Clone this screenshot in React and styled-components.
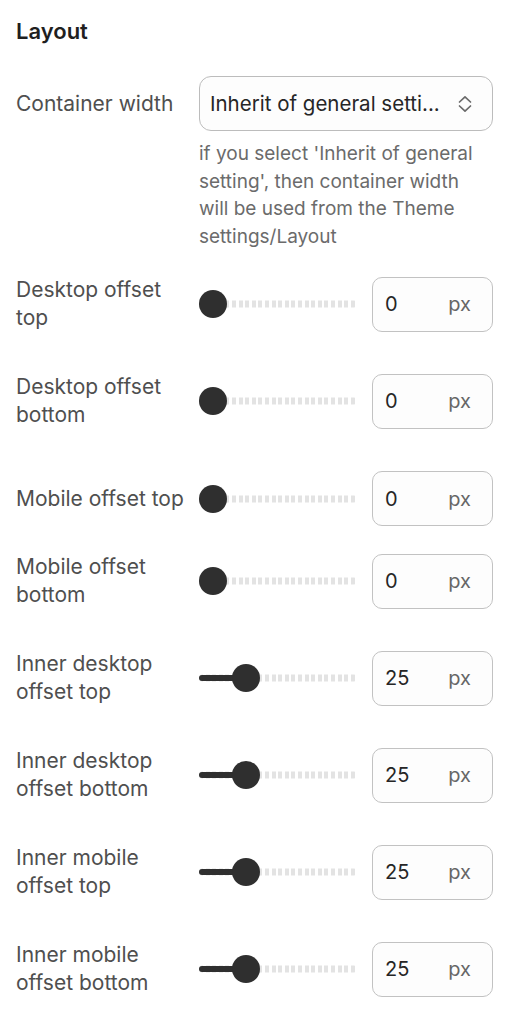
import React from "react"
import styled, { createGlobalStyle } from "styled-components"

const GlobalStyle = createGlobalStyle`
    body {
        margin: 0;
        background: #ffffff;
        font-family: Inter, "Noto Sans", sans-serif;
        -webkit-font-smoothing: antialiased;
    }
`

const offsetRows = [
    { label: ["Desktop offset", "top"], value: 0, gap: 26 },
    { label: ["Desktop offset", "bottom"], value: 0, gap: 41 },
    { label: ["Mobile offset top"], value: 0, gap: 42 },
    { label: ["Mobile offset", "bottom"], value: 0, gap: 27 },
    { label: ["Inner desktop", "offset top"], value: 25, gap: 41 },
    { label: ["Inner desktop", "offset bottom"], value: 25, gap: 41 },
    { label: ["Inner mobile", "offset top"], value: 25, gap: 41 },
    { label: ["Inner mobile", "offset bottom"], value: 25, gap: 41 },
]

const ChevronsUpDown = () => (
    <svg width="16" height="20" viewBox="0 0 16 20" fill="none">
        <path d="M2.5 8 L8 2.8 L13.5 8" stroke="#6a6a6a" strokeWidth="1.7" strokeLinecap="round" strokeLinejoin="round" />
        <path d="M2.5 12 L8 17.2 L13.5 12" stroke="#6a6a6a" strokeWidth="1.7" strokeLinecap="round" strokeLinejoin="round" />
    </svg>
)

const RangeSlider = ({ value, max = 100 }) => {
    const left = (value / max) * (SLIDER_WIDTH - THUMB_SIZE)
    return (
        <SliderBox>
            <SliderTrack />
            {value > 0 && <SliderFill style={{ width: left + THUMB_SIZE / 2 }} />}
            <SliderThumb style={{ left }} />
        </SliderBox>
    )
}

const OffsetRow = ({ label, value, gap }) => (
    <FieldRow $gap={gap}>
        <FieldLabel>
            {label.map((line) => (
                <span key={line}>{line}</span>
            ))}
        </FieldLabel>
        <Controls>
            <RangeSlider value={value} />
            <NumberBox>
                <NumberValue>{value}</NumberValue>
                <Unit>px</Unit>
            </NumberBox>
        </Controls>
    </FieldRow>
)

export default function App() {
    return (
        <Panel>
            <GlobalStyle />
            <Heading>Layout</Heading>
            <FieldRow $gap={31}>
                <FieldLabel>Container width</FieldLabel>
                <SelectBox>
                    <SelectValue>Inherit of general setti...</SelectValue>
                    <ChevronsUpDown />
                </SelectBox>
            </FieldRow>
            <Hint>
                if you select 'Inherit of general setting', then container width will be used from the Theme settings/Layout
            </Hint>
            {offsetRows.map((row) => (
                <OffsetRow key={row.label.join(" ")} {...row} />
            ))}
        </Panel>
    )
}

const SLIDER_WIDTH = 158
const THUMB_SIZE = 28

const Panel = styled.div`
    width: 514px;
    box-sizing: border-box;
    padding: 17px 21px 24px 16px;
`

const Heading = styled.h2`
    margin: 0;
    font-size: 22px;
    font-weight: 600;
    line-height: 28px;
    color: #1f1f1f;
`

const FieldRow = styled.div`
    display: grid;
    grid-template-columns: 183px 1fr;
    align-items: center;
    margin-top: ${(p) => p.$gap}px;
`

const FieldLabel = styled.div`
    display: flex;
    flex-direction: column;
    font-size: 21px;
    line-height: 28px;
    color: #4f4f4f;
    white-space: nowrap;
`

const SelectBox = styled.div`
    display: flex;
    align-items: center;
    justify-content: space-between;
    height: 55px;
    box-sizing: border-box;
    padding: 0 19px 0 10px;
    border: 1px solid #bcbcbc;
    border-radius: 12px;
    background: #fdfdfd;
`

const SelectValue = styled.span`
    font-size: 20.5px;
    color: #262626;
    white-space: nowrap;
`

const Hint = styled.p`
    margin: 9px 0 0 183px;
    font-size: 19px;
    line-height: 27.5px;
    color: #6b6b6b;
`

const Controls = styled.div`
    display: flex;
    align-items: center;
    gap: 15px;
`

const SliderBox = styled.div`
    position: relative;
    width: ${SLIDER_WIDTH}px;
    height: ${THUMB_SIZE}px;
    flex-shrink: 0;
`

const SliderTrack = styled.div`
    position: absolute;
    left: 0;
    right: 0;
    top: 50%;
    height: 7px;
    transform: translateY(-50%);
    border-radius: 4px;
    background: repeating-linear-gradient(
        to right,
        #e3e3e3 0 4px,
        #ffffff 4px 6.6px
    );
`

const SliderFill = styled.div`
    position: absolute;
    left: 0;
    top: 50%;
    height: 6px;
    transform: translateY(-50%);
    border-radius: 3px;
    background: #2f2f2f;
`

const SliderThumb = styled.div`
    position: absolute;
    top: 0;
    width: ${THUMB_SIZE}px;
    height: ${THUMB_SIZE}px;
    border-radius: 50%;
    background: #2f2f2f;
`

const NumberBox = styled.div`
    display: flex;
    align-items: center;
    justify-content: space-between;
    width: 121px;
    height: 55px;
    box-sizing: border-box;
    padding: 0 21px 0 12px;
    border: 1px solid #c2c2c2;
    border-radius: 10px;
    background: #fdfdfd;
    font-size: 20px;
`

const NumberValue = styled.span`
    color: #262626;
`

const Unit = styled.span`
    color: #666666;
`
